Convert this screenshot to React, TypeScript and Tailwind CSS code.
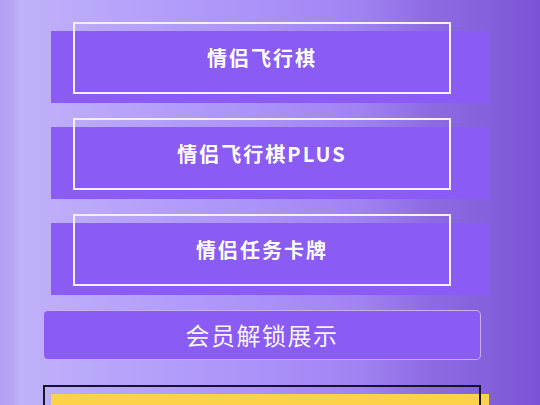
const games = ['情侣飞行棋', '情侣飞行棋PLUS', '情侣任务卡牌']

function GameButton({ label }: { label: string }) {
  return (
    <div className="relative ml-[51px] h-[81px] w-[438px] shrink-0">
      <div className="mt-[9px] h-[72px] w-full bg-[#8a5cf5]" />
      <div className="absolute top-0 left-[22px] flex h-[72px] w-[378px] items-center justify-center border-2 border-[#f4efff]">
        <span className="text-[20px] font-bold tracking-[2px] text-white">{label}</span>
      </div>
    </div>
  )
}

export default function App() {
  return (
    <div
      className="flex h-[405px] w-[540px] flex-col overflow-hidden bg-[linear-gradient(90deg,#b3a0f3_0px,#b7a5f5_12px,#c1b1f9_20px,#b7a4fa_120px,#ab91f9_260px,#a083f2_360px,#8e6ae2_430px,#8460dc_490px,#7b52d6_540px)] pt-[22px]"
      style={{ fontFamily: '"Noto Sans CJK SC", "Noto Sans", sans-serif' }}
    >
      <div className="flex shrink-0 flex-col gap-[15px]">
        {games.map((g) => (
          <GameButton key={g} label={g} />
        ))}
      </div>
      <div className="mt-[15px] ml-[43px] flex h-[50px] w-[438px] shrink-0 items-center justify-center rounded-[5px] border border-white/50 bg-[#8a5cf5]">
        <span className="text-[24px] tracking-[1.5px] text-white/95">会员解锁展示</span>
      </div>
      <div className="relative mt-[25px] ml-[43px] h-[60px] w-[446px] shrink-0">
        <div className="absolute top-[9px] left-[8px] h-[60px] w-[438px] bg-[#fdd24a]" />
        <div className="absolute top-0 left-0 h-[60px] w-[438px] border-2 border-[#15122a]" />
      </div>
    </div>
  )
}
